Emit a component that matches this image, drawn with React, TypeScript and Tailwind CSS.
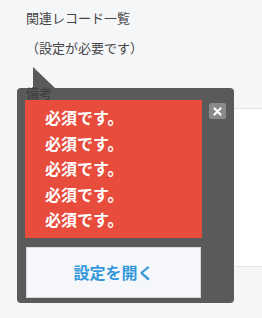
import React from 'react';

const font = { fontFamily: '"Noto Sans CJK JP", "Noto Sans", sans-serif' };

export default function App() {
  const lines = ['必須です。', '必須です。', '必須です。', '必須です。', '必須です。'];

  return (
    <div className="relative w-[262px] h-[318px] overflow-hidden bg-[#f5f6f8] text-[#444]" style={font}>
      {/* page behind the popup */}
      <div className="pt-[8px] pl-[26px] text-[13px] leading-[20px]">
        <p>関連レコード一覧</p>
        <p className="mt-[10px]">（設定が必要です）</p>
        <p className="relative z-20 mt-[25px] text-[#3c3c3c]">備考</p>
      </div>
      <div className="ml-[26px] mt-[5px] h-[159px] bg-white border-y border-[#e2e4e8]" />

      {/* tail */}
      <div className="absolute left-[33px] top-[67px] w-0 h-0 border-b-[21px] border-b-[#5a5a5a] border-r-[22px] border-r-transparent" />

      {/* popup */}
      <div className="absolute z-10 left-[17px] top-[88px] w-[217px] h-[215px] rounded-[4px] bg-[#5a5a5a] pl-[8px] pt-[12px]">
        <div className="flex items-start">
          <div className="w-[177px] bg-[#e74c3c] pl-[20px] py-[5px] text-white text-[16px] font-bold leading-[25.6px]">
            {lines.map((t, i) => (
              <div key={i}>{t}</div>
            ))}
          </div>
          <button className="ml-[7px] mt-[3px] w-[17px] h-[16px] rounded-[2px] bg-[#8a8a8a] flex items-center justify-center">
            <svg width="9" height="9" viewBox="0 0 9 9">
              <path d="M1.5 1.5 L7.5 7.5 M7.5 1.5 L1.5 7.5" stroke="white" strokeWidth="2.2" strokeLinecap="round" />
            </svg>
          </button>
        </div>
        <button className="mt-[9px] ml-[1px] w-[175px] h-[51px] bg-[#f5f7fa] border border-[#d6d8dc] text-[#3498db] text-[16px] font-bold">
          設定を開く
        </button>
      </div>
    </div>
  );
}
